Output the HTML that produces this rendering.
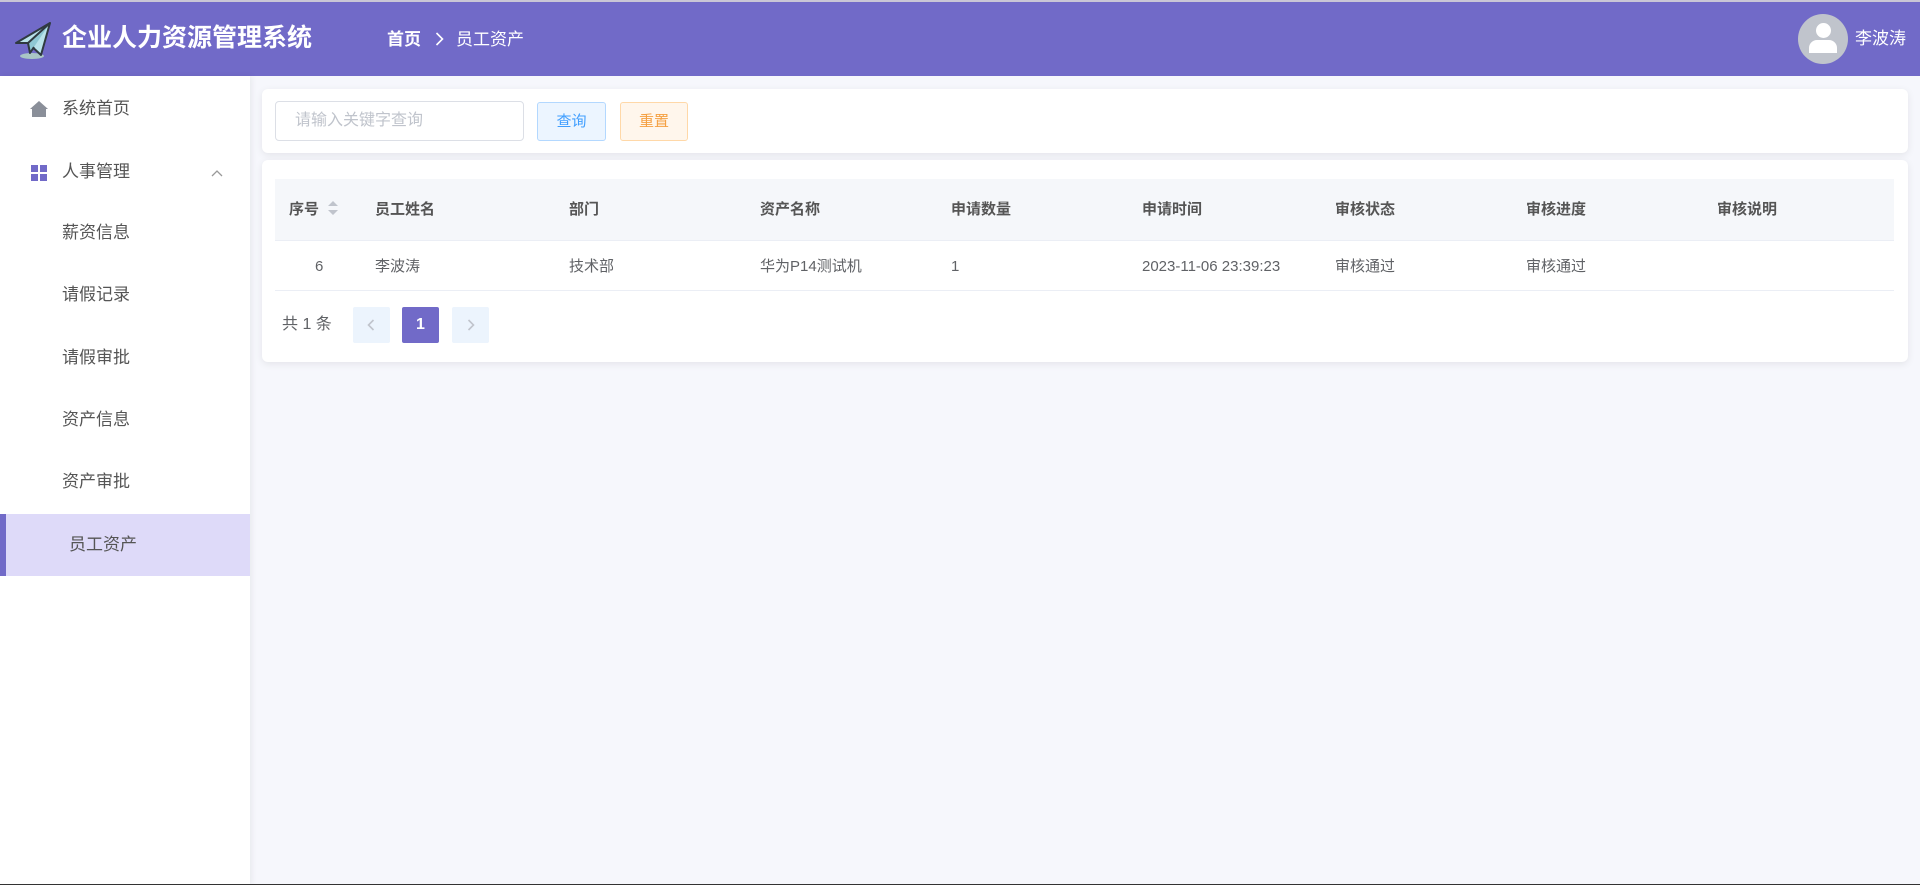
<!DOCTYPE html>
<html><head><meta charset="utf-8"><style>
*{margin:0;padding:0;box-sizing:border-box}
body{width:1920px;height:885px;overflow:hidden;background:#f6f7fc;font-family:"Liberation Sans","Noto Sans CJK SC",sans-serif;position:relative;color:#606266}
.hd{position:absolute;left:0;top:0;width:1920px;height:76px;background:#716ac8;color:#fff;border-top:2px solid #c9c6d6}
.abs{position:absolute}
.side{position:absolute;left:0;top:76px;width:250px;height:809px;background:#fff;box-shadow:2px 0 6px rgba(0,0,0,.06)}
.it{position:absolute;left:0;width:250px;height:62px;line-height:62px;font-size:17px;color:#555}
.card{position:absolute;background:#fff;border-radius:6px;box-shadow:0 2px 8px rgba(0,0,0,.08)}
.th{position:absolute;top:0;line-height:62px;font-size:15px;font-weight:bold;color:#555}
.td{position:absolute;top:0;line-height:49px;font-size:15px;color:#606266}
</style></head><body>
<div class="hd">
<svg class="abs" style="left:14px;top:19px" width="38" height="40" viewBox="0 0 38 40"><ellipse cx="18" cy="35" rx="12" ry="3" fill="#a9c6c6"/><path d="M36 2 L2 22 L14 22 L27 34 Z" fill="#b9e3ea" stroke="#2f3a40" stroke-width="2" stroke-linejoin="round"/><path d="M36 2 L14 22 L16 32 L20 26" fill="#8fc9d4" stroke="#2f3a40" stroke-width="2" stroke-linejoin="round"/></svg>
<div class="abs" style="left:62px;top:19px;font-size:25px;font-weight:bold;line-height:34px">企业人力资源管理系统</div>
<div class="abs" style="left:387px;top:24px;font-size:17px;line-height:28px"><b>首页</b><svg style="margin:0 12px 0 14px;vertical-align:-1px" width="9" height="14"><path d="M1.5 1 L7.5 7 L1.5 13" stroke="#fff" fill="none" stroke-width="1.6"/></svg>员工资产</div>
<div class="abs" style="left:1798px;top:12px;width:50px;height:50px;border-radius:50%;background:#c0c4cc;overflow:hidden"><div class="abs" style="left:18px;top:9px;width:15px;height:15px;border-radius:50%;background:#fff"></div><div class="abs" style="left:11px;top:26px;width:28px;height:13px;background:#fff;border-radius:8px 8px 0 0"></div></div>
<div class="abs" style="left:1855px;top:25px;font-size:17px;line-height:24px">李波涛</div>
</div>
<div class="side">
<div class="it" style="top:2px"><svg class="abs" style="left:30px;top:23px" width="18" height="16" viewBox="0 0 18 16"><path d="M9 0 L18 8 L16 8 L16 16 L2 16 L2 8 L0 8Z" fill="#8a8f99"/></svg><span style="margin-left:62px">系统首页</span></div>
<div class="it" style="top:65px"><svg class="abs" style="left:31px;top:24px" width="16" height="16"><rect width="7" height="7" fill="#716ac8"/><rect x="9" width="7" height="7" fill="#716ac8"/><rect y="9" width="7" height="7" fill="#716ac8"/><rect x="9" y="9" width="7" height="7" fill="#716ac8"/></svg><span style="margin-left:62px">人事管理</span><svg class="abs" style="left:211px;top:28px" width="12" height="8"><path d="M1 7 L6 2 L11 7" stroke="#999" fill="none" stroke-width="1.3"/></svg></div>
<div class="it" style="top:126px"><span style="margin-left:62px">薪资信息</span></div>
<div class="it" style="top:188px"><span style="margin-left:62px">请假记录</span></div>
<div class="it" style="top:251px"><span style="margin-left:62px">请假审批</span></div>
<div class="it" style="top:313px"><span style="margin-left:62px">资产信息</span></div>
<div class="it" style="top:375px"><span style="margin-left:62px">资产审批</span></div>
<div class="it" style="top:438px;background:#dedaf9;border-left:6px solid #716ac8"><span style="margin-left:63px">员工资产</span></div>
</div>
<div class="card" style="left:262px;top:89px;width:1646px;height:64px">
<div class="abs" style="left:13px;top:12px;width:249px;height:40px;border:1px solid #dcdfe6;border-radius:4px;font-size:16px;color:#c0c4cc;line-height:38px;padding-left:19px">请输入关键字查询</div>
<div class="abs" style="left:275px;top:13px;width:69px;height:39px;border:1px solid #b3d8ff;background:#ecf5ff;border-radius:3px;color:#409eff;font-size:15px;line-height:37px;text-align:center">查询</div>
<div class="abs" style="left:358px;top:13px;width:68px;height:39px;border:1px solid #ffd8a8;background:#fff6ec;border-radius:3px;color:#f5a042;font-size:15px;line-height:37px;text-align:center">重置</div>
</div>
<div class="card" style="left:262px;top:160px;width:1646px;height:202px">
<div class="abs" style="left:13px;top:19px;width:1619px;height:62px;background:#f5f7fa;border-bottom:1px solid #ebeef5">
<div class="th" style="left:14px">序号<svg style="margin-left:8px;vertical-align:-3px" width="12" height="18"><path d="M1 7 L6 2 L11 7Z M1 11 L6 16 L11 11Z" fill="#c0c4cc"/></svg></div>
<div class="th" style="left:100px">员工姓名</div><div class="th" style="left:294px">部门</div><div class="th" style="left:485px">资产名称</div><div class="th" style="left:676px">申请数量</div><div class="th" style="left:867px">申请时间</div><div class="th" style="left:1060px">审核状态</div><div class="th" style="left:1251px">审核进度</div><div class="th" style="left:1442px">审核说明</div>
</div>
<div class="abs" style="left:13px;top:82px;width:1619px;height:49px;border-bottom:1px solid #ebeef5">
<div class="td" style="left:40px">6</div><div class="td" style="left:100px">李波涛</div><div class="td" style="left:294px">技术部</div><div class="td" style="left:485px">华为P14测试机</div><div class="td" style="left:676px">1</div><div class="td" style="left:867px">2023-11-06 23:39:23</div><div class="td" style="left:1060px">审核通过</div><div class="td" style="left:1251px">审核通过</div>
</div>
<div class="abs" style="left:20px;top:147px;font-size:16px;line-height:36px;color:#606266">共 1 条</div>
<div class="abs" style="left:91px;top:147px;width:37px;height:36px;background:#ecf4fd;border-radius:2px"><svg class="abs" style="left:14px;top:12px" width="8" height="12"><path d="M6.5 1 L1.5 6 L6.5 11" stroke="#c0c4cc" fill="none" stroke-width="1.6"/></svg></div>
<div class="abs" style="left:140px;top:147px;width:37px;height:36px;background:#716ac8;border-radius:2px;color:#fff;text-align:center;line-height:36px;font-size:16px;font-weight:bold">1</div>
<div class="abs" style="left:190px;top:147px;width:37px;height:36px;background:#ecf4fd;border-radius:2px"><svg class="abs" style="left:15px;top:12px" width="8" height="12"><path d="M1.5 1 L6.5 6 L1.5 11" stroke="#c0c4cc" fill="none" stroke-width="1.6"/></svg></div>
</div>
<div class="abs" style="left:0;top:884px;width:1920px;height:1px;background:#333"></div>
</body></html>
